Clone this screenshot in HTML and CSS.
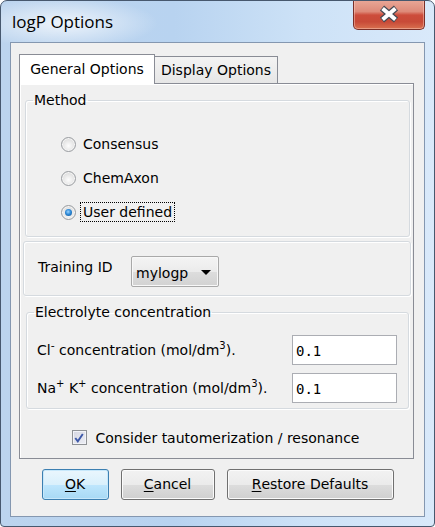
FILE: index.html
```html
<!DOCTYPE html>
<html>
<head>
<meta charset="utf-8">
<link rel="stylesheet" href="styles.css">
</head>
<body>
<div class="window">
  <div class="titlebar">
    <span class="title">logP Options</span>
    <div class="close">
      <svg width="22" height="18" viewBox="0 0 22 18">
        <path d="M4 3 L18 15 M18 3 L4 15" stroke="#444b55" stroke-width="6.4" stroke-linecap="butt" fill="none"/>
        <path d="M4.6 3.5 L17.4 14.5 M17.4 3.5 L4.6 14.5" stroke="#ffffff" stroke-width="4" stroke-linecap="butt" fill="none"/>
      </svg>
    </div>
  </div>
  <div class="client">
    <div class="tabbar">
      <div class="tab active">General Options</div>
      <div class="tab">Display Options</div>
    </div>
    <div class="panel">
      <fieldset class="group method">
        <legend>Method</legend>
        <div class="radios">
          <div class="radio"><span class="rb"></span><span>Consensus</span></div>
          <div class="radio"><span class="rb"></span><span>ChemAxon</span></div>
          <div class="radio"><span class="rb on"></span><span class="focus">User defined</span></div>
        </div>
      </fieldset>
      <div class="box training">
        <span class="tlabel">Training ID</span>
        <div class="combo"><span>mylogp</span><span class="arrow"></span></div>
      </div>
      <fieldset class="group electrolyte">
        <legend>Electrolyte concentration</legend>
        <div class="rows">
          <span class="rlabel">Cl<sup class="minus">-</sup> concentration (mol/dm<sup>3</sup>).</span>
          <div class="input">0.1</div>
          <span class="rlabel">Na<sup>+</sup> K<sup>+</sup> concentration (mol/dm<sup>3</sup>).</span>
          <div class="input">0.1</div>
        </div>
      </fieldset>
      <div class="check-row">
        <span class="cb">
          <svg width="12" height="12" viewBox="0 0 12 12"><path d="M2.3 6 L4.8 9.3 L9.8 2" stroke="#3d58a8" stroke-width="1.9" fill="none"/></svg>
        </span>
        <span>Consider tautomerization / resonance</span>
      </div>
    </div>
    <div class="buttons">
      <div class="btn ok"><u>O</u>K</div>
      <div class="btn cancel"><u>C</u>ancel</div>
      <div class="btn restore"><u>R</u>estore Defaults</div>
    </div>
  </div>
</div>
</body>
</html>
```
FILE: styles.css
```css
html, body {
  margin: 0;
  padding: 0;
  background: #ffffff;
}
.window {
  width: 435px;
  height: 527px;
  box-sizing: border-box;
  border: 1px solid #47586e;
  border-radius: 7px 7px 4px 4px;
  background:
    radial-gradient(ellipse 95px 26px at 62px 22px, rgba(255,255,255,0.75), rgba(255,255,255,0) 100%),
    linear-gradient(90deg, #bcd4ee 0%, #b8d3f0 40%, #cde2f7 70%, #d9e9fa 100%);
  font-family: "DejaVu Sans", sans-serif;
  font-size: 14px;
  color: #000;
  overflow: hidden;
}
.titlebar {
  height: 41px;
  display: flex;
  align-items: flex-start;
}
.title {
  font-family: "Open Sans", sans-serif;
  font-size: 17px;
  line-height: 20px;
  margin: 11px 0 0 11px;
  color: #000;
}
.close {
  margin-left: auto;
  margin-right: 9px;
  margin-top: -1px;
  width: 72px;
  height: 30px;
  box-sizing: border-box;
  border: 1px solid #7a2f28;
  border-top: none;
  border-radius: 0 0 5px 5px;
  background: linear-gradient(#e9a898 0%, #de8a79 40%, #cd4c3b 52%, #c84a38 75%, #d8704f 100%);
  box-shadow: inset 0 0 0 1px rgba(255,210,200,0.45);
  display: flex;
  align-items: center;
  justify-content: center;
}
.close svg { display: block; margin-top: -1px; }
.client {
  margin: 0 9px;
  height: 475px;
  box-sizing: border-box;
  border: 1px solid #8497b0;
  background: #f0f0f0;
  padding: 11px 9px 0 8px;
  display: flex;
  flex-direction: column;
}
.tabbar {
  display: flex;
  align-items: flex-end;
  height: 29px;
  position: relative;
  z-index: 1;
}
.tab {
  box-sizing: border-box;
  border: 1px solid #898c95;
  border-bottom: none;
  text-align: center;
}
.tab.active {
  width: 136px;
  height: 30px;
  margin-bottom: -1px;
  background: #ffffff;
  line-height: 28px;
  position: relative;
  z-index: 2;
}
.tab:not(.active) {
  width: 124px;
  height: 27px;
  margin-left: -1px;
  background: linear-gradient(#f3f3f3, #e6e6e6);
  line-height: 27px;
}
.panel {
  width: 395px;
  height: 376px;
  box-sizing: border-box;
  border: 1px solid #898c95;
  background: #f0f0f0;
  box-shadow: inset 1px 1px 0 #ffffff;
  display: flex;
  flex-direction: column;
}
.group {
  margin: 0;
  padding: 0 0 0 7px;
  min-width: 0;
  border: 1px solid #d5dadf;
  border-radius: 3px;
  box-shadow: inset 1px 1px 0 #ffffff, 1px 1px 0 #ffffff;
  box-sizing: border-box;
}
.group legend {
  padding: 0 1px;
  line-height: 16px;
}
.method {
  margin: 8px 0 0 5px;
  width: 385px;
  height: 145px;
}
.radios {
  margin-top: 19px;
  padding-left: 28px;
}
.radio {
  height: 34px;
  display: flex;
  align-items: center;
}
.rb {
  width: 15px;
  height: 15px;
  box-sizing: border-box;
  border-radius: 50%;
  border: 1px solid #9a9da1;
  background: radial-gradient(circle at 50% 60%, #fdfdfd 0%, #e9e9e9 45%, #cfcfcf 100%);
  box-shadow: inset 0 0 0 1px #f6f6f6;
  margin-right: 7px;
  display: flex;
  align-items: center;
  justify-content: center;
  flex: none;
}
.rb.on::after {
  content: "";
  width: 7px;
  height: 7px;
  border-radius: 50%;
  background: radial-gradient(circle at 45% 40%, #9ad4ff 0%, #2f8ad8 45%, #0e4f8c 100%);
}
.focus {
  outline: 1px dotted #000;
  outline-offset: 1px;
  padding: 0 1px;
  margin-left: -1px;
}
.box {
  box-sizing: border-box;
  border: 1px solid #d5dadf;
  border-radius: 3px;
  box-shadow: inset 1px 1px 0 #ffffff, 1px 1px 0 #ffffff;
}
.training {
  margin: 4px 0 0 3px;
  width: 388px;
  height: 55px;
  display: flex;
  align-items: flex-start;
  padding-left: 14px;
}
.tlabel {
  width: 93px;
  margin-top: 17px;
  line-height: 17px;
}
.combo {
  margin-top: 14px;
  width: 88px;
  height: 31px;
  box-sizing: border-box;
  border: 1px solid #a9a9a9;
  border-radius: 2px;
  background: linear-gradient(#f4f4f4 0%, #ebebeb 50%, #dddddd 51%, #d2d2d2 100%);
  box-shadow: inset 0 0 0 1px #f8f8f8;
  display: flex;
  align-items: center;
  padding-left: 4px;
  padding-top: 2px;
}
.arrow {
  margin-left: auto;
  margin-right: 7px;
  width: 0;
  height: 0;
  border-left: 5px solid transparent;
  border-right: 5px solid transparent;
  border-top: 5px solid #000;
}
.electrolyte {
  margin: 8px 0 0 6px;
  width: 383px;
  height: 105px;
}
.rows {
  margin-top: 15px;
  padding-left: 3px;
  display: grid;
  grid-template-columns: 255px 105px;
  row-gap: 8px;
  align-items: center;
}
.rlabel sup {
  font-size: 10px;
  vertical-align: 6px;
  line-height: 0;
}
.rlabel sup.minus { font-size: 11px; }
.input {
  height: 30px;
  box-sizing: border-box;
  border: 1px solid #abadb3;
  background: #fff;
  font-family: "DejaVu Sans Mono", monospace;
  font-size: 14px;
  line-height: 28px;
  padding-left: 3px;
  padding-top: 1px;
}
.check-row {
  margin-top: 20px;
  height: 17px;
  display: flex;
  align-items: center;
  justify-content: center;
  padding-right: 2px;
}
.cb {
  width: 15px;
  height: 15px;
  box-sizing: border-box;
  border: 1px solid #8f9296;
  background: linear-gradient(135deg, #d6d7e2, #eceef5);
  box-shadow: inset 0 0 0 1px #f2f3f8;
  margin-right: 9px;
  display: flex;
  align-items: center;
  justify-content: center;
}
.cb svg { display: block; }
.buttons {
  margin-top: 10px;
  display: flex;
  justify-content: center;
  gap: 12px;
  padding-left: 1px;
}
.btn {
  height: 31px;
  box-sizing: border-box;
  border: 1px solid #707070;
  border-radius: 3px;
  background: linear-gradient(#f2f2f2 0%, #ebebeb 50%, #dddddd 51%, #cfcfcf 100%);
  box-shadow: inset 0 0 0 1px #fbfbfb;
  display: flex;
  align-items: center;
  justify-content: center;
  line-height: 17px;
}
.btn u { text-underline-offset: 2px; }
.ok {
  width: 67px;
  border-color: #3c7fb1;
  background: linear-gradient(#eaf6fd 0%, #d9f0fc 50%, #bee6fd 51%, #a7d9f5 100%);
  box-shadow: inset 0 0 0 1px #c7e8fb;
}
.cancel { width: 94px; }
.restore { width: 167px; }
```
